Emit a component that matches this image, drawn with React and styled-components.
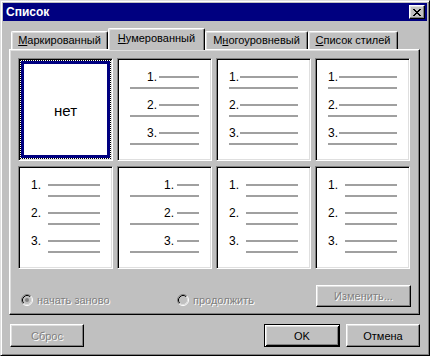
import React from "react";
import styled, { createGlobalStyle, css } from "styled-components";

const GlobalStyle = createGlobalStyle`
  html, body {
    margin: 0;
    padding: 0;
    background: #c0c0c0;
  }
  body {
    font-family: "Liberation Sans", Arial, sans-serif;
    font-size: 11px;
    color: #000;
  }
`;

const raised = css`
  border: 1px solid;
  border-color: #fff #000 #000 #fff;
  box-shadow: inset -1px -1px #808080, inset 1px 1px #dfdfdf;
`;

const Window = styled.div`
  box-sizing: border-box;
  width: 430px;
  height: 356px;
  background: #c0c0c0;
  border: 1px solid;
  border-color: #dfdfdf #000 #000 #dfdfdf;
  box-shadow: inset 1px 1px #fff, inset -1px -1px #808080;
  padding: 2px;
  display: flex;
  flex-direction: column;
`;

const TitleBar = styled.div`
  height: 18px;
  background: #000080;
  display: flex;
  align-items: center;
  justify-content: space-between;
  padding: 0 2px 0 3px;
`;

const Title = styled.span`
  color: #fff;
  font-weight: bold;
  font-size: 12px;
`;

const CloseButton = styled.div`
  box-sizing: border-box;
  width: 16px;
  height: 14px;
  background: #c0c0c0;
  ${raised};
  display: flex;
  align-items: center;
  justify-content: center;
`;

const Body = styled.div`
  padding: 7px 7px 0 6px;
  display: flex;
  flex-direction: column;
`;

const TabStrip = styled.div`
  display: flex;
  align-items: flex-end;
  height: 21px;
  padding-left: 2px;
  position: relative;
  z-index: 1;
`;

const Tab = styled.div`
  box-sizing: border-box;
  width: ${(p) => p.$w}px;
  height: ${(p) => (p.$active ? 22 : 18)}px;
  margin-bottom: ${(p) => (p.$active ? -1 : 0)}px;
  padding-bottom: ${(p) => (p.$active ? 3 : 1)}px;
  background: #c0c0c0;
  border-top: 1px solid #fff;
  border-left: 1px solid #fff;
  border-right: 1px solid #000;
  border-radius: 2px 2px 0 0;
  box-shadow: inset -1px 0 #808080, inset 1px 1px #dfdfdf;
  display: flex;
  align-items: center;
  justify-content: center;
  white-space: nowrap;
`;

const Panel = styled.div`
  box-sizing: border-box;
  width: 411px;
  border: 1px solid;
  border-color: #fff #000 #000 #fff;
  box-shadow: inset -1px -1px #808080, inset 1px 1px #dfdfdf;
  padding: 8px 8px 7px 8px;
`;

const Grid = styled.div`
  display: grid;
  grid-template-columns: repeat(4, 95px);
  grid-auto-rows: 103px;
  column-gap: 4px;
  row-gap: 5px;
`;

const Cell = styled.div`
  box-sizing: border-box;
  background: #fff;
  border: 1px solid;
  border-color: #808080 #fff #fff #808080;
  box-shadow: inset 1px 1px #000, inset -1px -1px #dfdfdf;
  padding: 1px;
  display: flex;
`;

const Selection = styled.div`
  flex: 1;
  border: 1px dotted #000;
  box-shadow: inset 0 0 0 3px #000080;
  display: flex;
  align-items: center;
  justify-content: center;
  font-size: 15px;
  padding-top: 2px;
`;

const ListBody = styled.div`
  flex: 1;
  padding: 10px 11px 0 11px;
`;

const Item = styled.div`
  & + & {
    margin-top: 9px;
  }
`;

const TopRow = styled.div`
  display: flex;
  align-items: center;
  height: 14px;
`;

const Num = styled.span`
  flex: none;
  width: ${(p) => p.$w}px;
  text-align: ${(p) => p.$align};
  font-size: 12px;
  line-height: 14px;
`;

const Rule = styled.div`
  flex: 1;
  height: 2px;
  background: #a0a0a0;
  margin-left: ${(p) => p.$indent}px;
`;

const UnderRule = styled(Rule)`
  margin-top: 3px;
`;

const OptionsRow = styled.div`
  display: flex;
  align-items: flex-end;
  height: 22px;
  margin-top: 16px;
`;

const disabledText = css`
  color: #808080;
  text-shadow: 1px 1px #fff;
`;

const RadioOption = styled.div`
  display: flex;
  align-items: center;
  gap: 4px;
  width: ${(p) => p.$w}px;
  margin-left: ${(p) => p.$left || 0}px;
  height: 14px;
  ${disabledText};
`;

const Button = styled.div`
  box-sizing: border-box;
  width: ${(p) => p.$w}px;
  height: ${(p) => p.$h || 23}px;
  background: #c0c0c0;
  display: flex;
  align-items: center;
  justify-content: center;
  margin-left: ${(p) => (p.$push ? "auto" : p.$left ? `${p.$left}px` : "0")};
  ${(p) =>
    p.$default
      ? css`
          border: 1px solid #000;
          box-shadow: inset 1px 1px #fff, inset -1px -1px #000,
            inset 2px 2px #dfdfdf, inset -2px -2px #808080;
        `
      : raised};
  ${(p) => p.$disabled && disabledText};
`;

const Footer = styled.div`
  display: flex;
  align-items: center;
  margin-top: 9px;
  padding-left: 1px;
`;

const styles = {
  A: { align: "right", w: 27, gap: 2, under: 0 },
  B: { align: "left", w: 10, gap: 1, under: 0 },
  C: { align: "left", w: 17, gap: 0, under: 17 },
  D: { align: "right", w: 44, gap: 3, under: 0 },
};

const cells = ["none", "A", "B", "B", "C", "D", "C", "C"];

const closeGlyph = [
  "xx....xx",
  ".xx..xx.",
  "..xxxx..",
  "...xx...",
  "..xxxx..",
  ".xx..xx.",
  "xx....xx",
];

const CloseIcon = () => (
  <svg width="8" height="7" viewBox="0 0 8 7" shapeRendering="crispEdges">
    {closeGlyph.flatMap((row, y) =>
      row.split("").map((c, x) =>
        c === "x" ? <rect key={`${x}-${y}`} x={x} y={y} width="1" height="1" fill="#000" /> : null
      )
    )}
  </svg>
);

const Radio = ({ checked }) => (
  <svg width="12" height="12" viewBox="0 0 12 12">
    <circle cx="6" cy="6" r="5" fill="#c0c0c0" />
    <path d="M2.11 9.89 A5.5 5.5 0 0 1 9.89 2.11" stroke="#808080" fill="none" />
    <path d="M9.89 2.11 A5.5 5.5 0 0 1 2.11 9.89" stroke="#fff" fill="none" />
    <path d="M2.82 9.18 A4.5 4.5 0 0 1 9.18 2.82" stroke="#000" fill="none" />
    <path d="M9.18 2.82 A4.5 4.5 0 0 1 2.82 9.18" stroke="#dfdfdf" fill="none" />
    {checked && <circle cx="6" cy="6" r="2" fill="#808080" />}
  </svg>
);

const ListPreview = ({ kind }) => {
  const s = styles[kind];
  return (
    <ListBody>
      {["1.", "2.", "3."].map((n) => (
        <Item key={n}>
          <TopRow>
            <Num $w={s.w} $align={s.align}>{n}</Num>
            <Rule $indent={s.gap} />
          </TopRow>
          <UnderRule $indent={s.under} />
        </Item>
      ))}
    </ListBody>
  );
};

export default function App() {
  return (
    <>
      <GlobalStyle />
      <Window>
        <TitleBar>
          <Title>Список</Title>
          <CloseButton>
            <CloseIcon />
          </CloseButton>
        </TitleBar>
        <Body>
          <TabStrip>
            <Tab $w={97}><u>М</u>аркированный</Tab>
            <Tab $w={97} $active><u>Н</u>умерованный</Tab>
            <Tab $w={103}>М<u>н</u>огоуровневый</Tab>
            <Tab $w={90}><u>С</u>писок стилей</Tab>
          </TabStrip>
          <Panel>
            <Grid>
              {cells.map((kind, i) => (
                <Cell key={i}>
                  {kind === "none" ? (
                    <Selection>нет</Selection>
                  ) : (
                    <ListPreview kind={kind} />
                  )}
                </Cell>
              ))}
            </Grid>
            <OptionsRow>
              <RadioOption $w={156} $left={3}>
                <Radio checked />
                начать заново
              </RadioOption>
              <RadioOption $w={100}>
                <Radio />
                продолжить
              </RadioOption>
              <Button $w={95} $h={22} $push $disabled>
                Изменить...
              </Button>
            </OptionsRow>
          </Panel>
          <Footer>
            <Button $w={74} $disabled>Сброс</Button>
            <Button $w={76} $default $push>OK</Button>
            <Button $w={74} $left={6}>Отмена</Button>
          </Footer>
        </Body>
      </Window>
    </>
  );
}
